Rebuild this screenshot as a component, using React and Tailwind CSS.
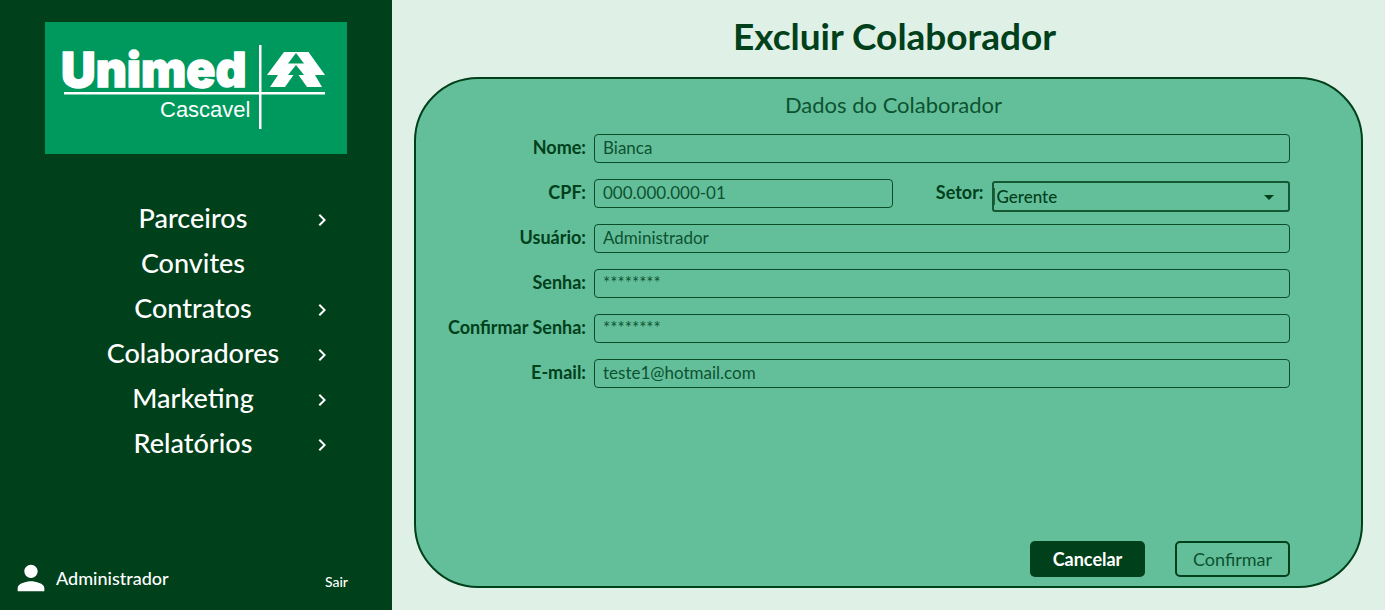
import { MdChevronRight, MdPerson, MdArrowDropDown } from "react-icons/md";

const navItems = [
  { label: "Parceiros", expandable: true },
  { label: "Convites", expandable: false },
  { label: "Contratos", expandable: true },
  { label: "Colaboradores", expandable: true },
  { label: "Marketing", expandable: true },
  { label: "Relatórios", expandable: true },
];

const inputClass =
  "h-[29px] w-full min-w-0 rounded-[4px] border border-[#00401a]/90 bg-transparent px-2 pb-0.5 text-[17px] leading-6 text-[#0d5230] outline-none";
const labelClass =
  "pr-2 pb-1 text-right text-[18px] leading-6 font-bold whitespace-nowrap";

function Logo() {
  return (
    <svg viewBox="0 0 302 132" className="block w-full" role="img" aria-label="Unimed Cascavel">
      <rect width="302" height="132" fill="#00995d" />
      <text
        x="16"
        y="65"
        fill="#fff"
        stroke="#fff"
        strokeWidth="1.4"
        fontFamily="Inter, sans-serif"
        fontWeight="900"
        fontSize="48"
      >
        Unimed
      </text>
      <text x="115" y="95" fill="#fff" fontFamily="Liberation Sans, Arial, sans-serif" fontSize="22">
        Cascavel
      </text>
      <rect x="19" y="70" width="261" height="2.5" fill="#fff" />
      <rect x="214" y="23" width="2.5" height="84" fill="#fff" />
      <path
        fill="#fff"
        d="M239 30 H263.500 L280 53 H270 L277 65 H262 L253.500 53 H259 L251 43 L243 53 H248.500 L240 65 H225 L233 53 H222 Z"
      />
      <path fill="#00995d" d="M251 31 L259 41.500 H243 Z" />
    </svg>
  );
}

function TextField({ id, label, value }) {
  return (
    <>
      <label htmlFor={id} className={labelClass}>
        {label}
      </label>
      <input id={id} type="text" readOnly defaultValue={value} className={inputClass} />
    </>
  );
}

export default function App() {
  return (
    <div className="flex min-h-screen bg-white pr-px pb-0.5 font-['Lato',sans-serif] text-[#00401a]">
      <aside className="flex w-[392px] shrink-0 flex-col bg-[#00401a] text-white">
        <div className="pt-[22px] pr-[45px] pl-[45px]">
          <Logo />
        </div>

        <nav className="mt-[41px] pr-[58px] pl-[76px]">
          {navItems.map((item) => (
            <a key={item.label} href="#" className="flex h-[45px] items-center">
              <span className="flex-1 text-center text-[27px] leading-9 font-medium">{item.label}</span>
              <span className="flex w-6 justify-center pt-1">
                {item.expandable && <MdChevronRight size={24} />}
              </span>
            </a>
          ))}
        </nav>

        <div className="mt-auto flex items-center pr-[44px] pb-3 pl-[11px]">
          <MdPerson size={40} />
          <span className="ml-[5px] text-[18px] leading-6 font-medium">Administrador</span>
          <button type="button" className="ml-auto pt-2 text-[14px] leading-5 font-medium">
            Sair
          </button>
        </div>
      </aside>

      <main className="flex min-w-0 flex-1 flex-col bg-[#dff0e7] pt-3 pr-[22px] pb-[22px] pl-[22px]">
        <h1 className="pl-3 text-center text-[37px] leading-[48px] font-bold">Excluir Colaborador</h1>

        <form className="mt-[17px] flex flex-1 flex-col rounded-[64px] border-2 border-[#00401a] bg-[#63bf9a] pt-[10px] pr-[71px] pb-[9px] pl-[30px]">
          <h2 className="pl-[51px] text-center text-[22px] leading-8 text-[#0d5230]">Dados do Colaborador</h2>

          <div className="mt-[13px] grid grid-cols-[148px_1fr] items-center gap-y-4">
            <TextField id="nome" label="Nome:" value="Bianca" />

            <label htmlFor="cpf" className={labelClass}>
              CPF:
            </label>
            <div className="grid grid-cols-[1fr_99px_1fr] items-center">
              <input id="cpf" type="text" readOnly defaultValue="000.000.000-01" className={inputClass} />
              <label htmlFor="setor" className={labelClass}>
                Setor:
              </label>
              <div className="grid h-[29px] items-start pt-0.5">
                <select
                  id="setor"
                  className="col-start-1 row-start-1 h-[31px] w-full appearance-none rounded-[3px] border-2 border-[#00401a]/80 bg-transparent pl-[3px] text-[17px] leading-6 font-medium outline-none"
                >
                  <option>Gerente</option>
                </select>
                <span className="pointer-events-none col-start-1 row-start-1 flex h-[31px] items-center justify-between pr-[9px] pl-0.5">
                  <span className="h-[17px] w-px bg-[#00401a]/70" />
                  <MdArrowDropDown size={24} />
                </span>
              </div>
            </div>

            <TextField id="usuario" label="Usuário:" value="Administrador" />
            <TextField id="senha" label="Senha:" value="********" />
            <TextField id="confirmar" label="Confirmar Senha:" value="********" />
            <TextField id="email" label="E-mail:" value="teste1@hotmail.com" />
          </div>

          <div className="mt-auto flex justify-end gap-[30px]">
            <button
              type="button"
              className="h-9 w-[115px] rounded-[5px] bg-[#00401a] text-[18px] leading-6 font-bold text-white"
            >
              Cancelar
            </button>
            <button
              type="button"
              className="h-9 w-[115px] rounded-[5px] border-2 border-[#00401a] text-[18px] leading-6 text-[#0d5230]"
            >
              Confirmar
            </button>
          </div>
        </form>
      </main>
    </div>
  );
}
